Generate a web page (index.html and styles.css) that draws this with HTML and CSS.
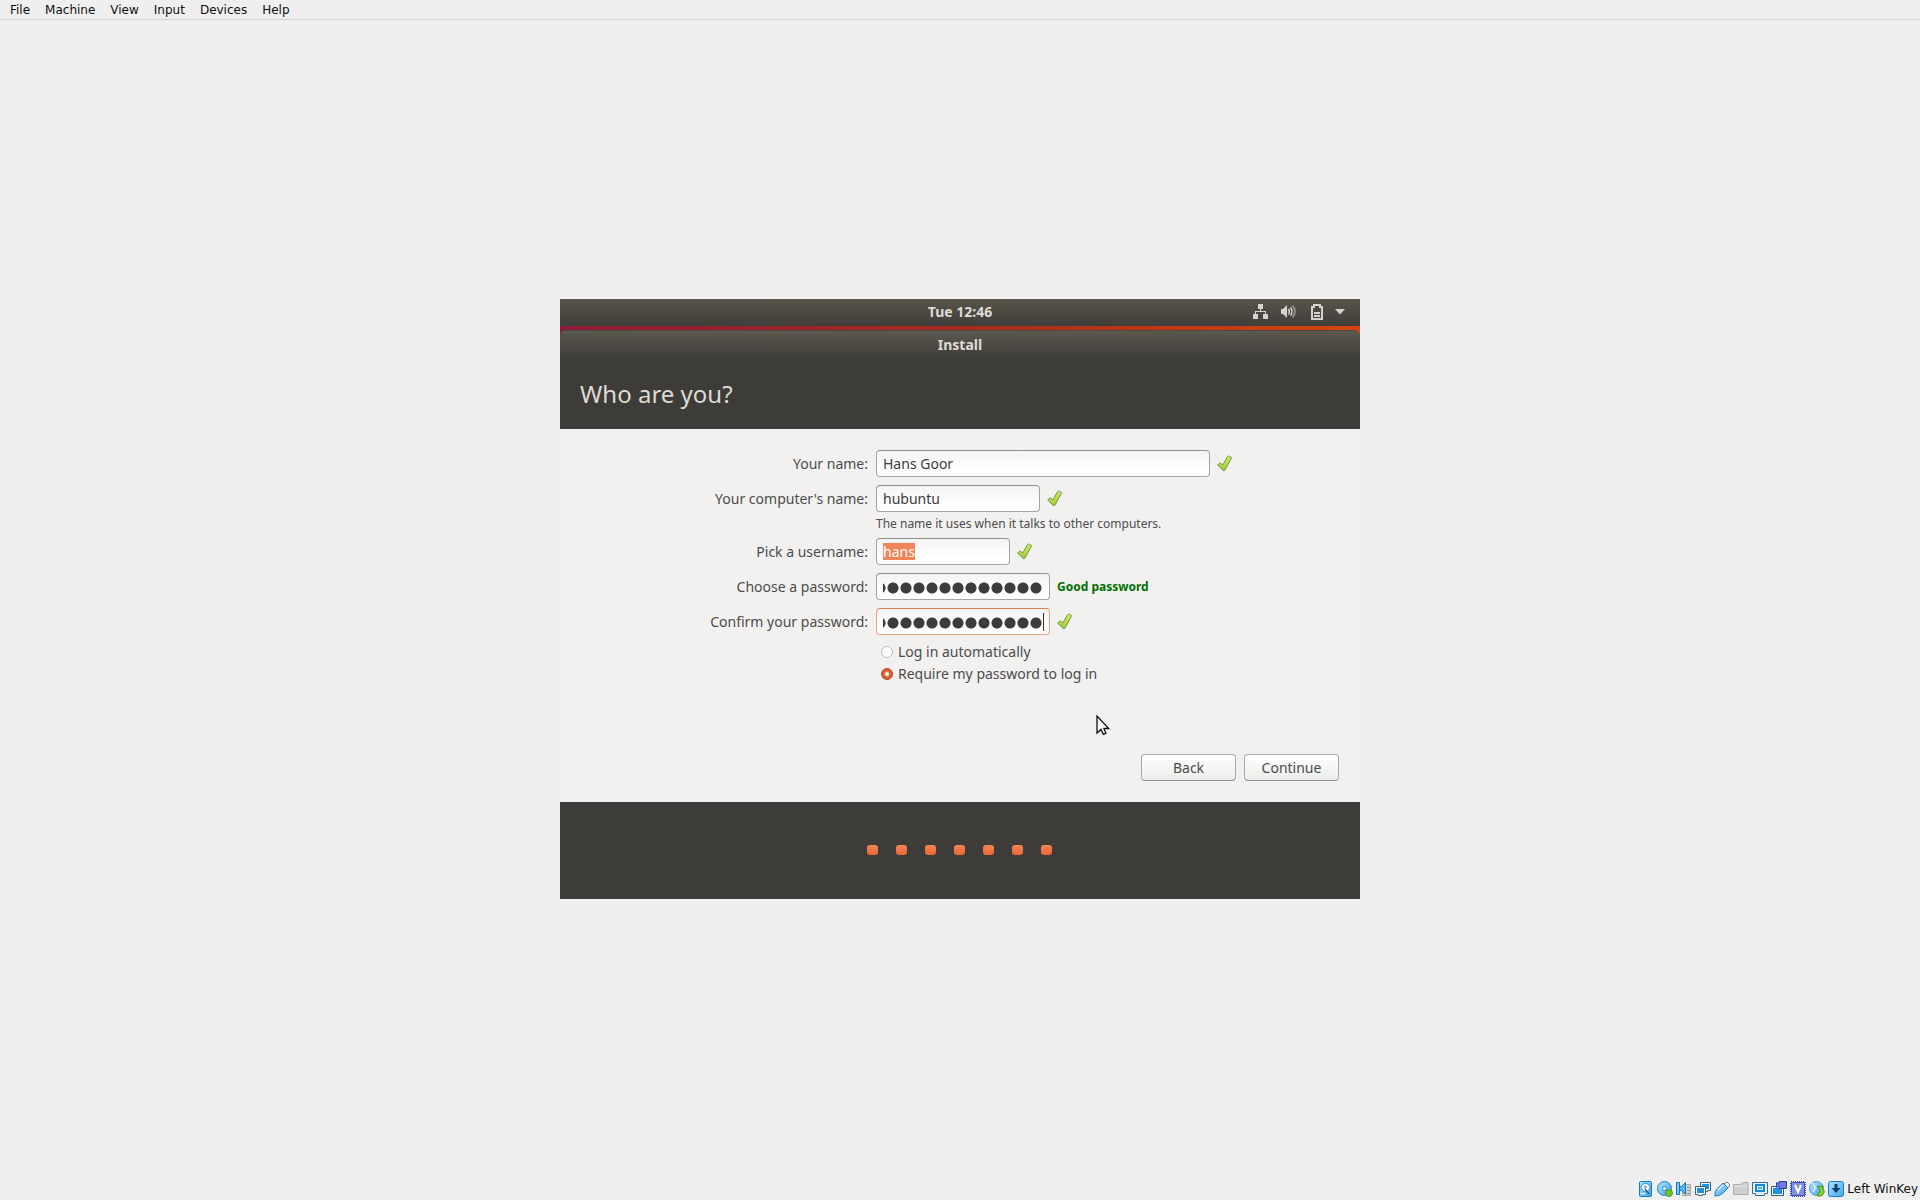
FILE: index.html
```html
<!DOCTYPE html>
<html lang="en">
<head>
<meta charset="utf-8">
<title>Install</title>
<link rel="stylesheet" href="styles.css">
</head>
<body>
<svg class="defs" aria-hidden="true">
  <defs>
    <linearGradient id="green" x1="0" y1="0" x2="0" y2="1"><stop offset="0" stop-color="#d4ea6c"/><stop offset="1" stop-color="#a3c63a"/></linearGradient>
    <linearGradient id="blue" x1="0" y1="0" x2="1" y2="1"><stop offset="0" stop-color="#aee2fc"/><stop offset="1" stop-color="#41a6ee"/></linearGradient>
    <symbol id="check" viewBox="0 0 15 16"><path d="M.7 9.600 3.200 7.400l2.600 2L10.600 1.200q.8-1 2-.4l1.300.7q.8.5.4 1.400L8 14.600q-.8 1.200-1.800.4Z" fill="url(#green)" stroke="#6c9a3c" stroke-linejoin="round"/></symbol>
  </defs>
</svg>

<nav class="menubar">
  <a href="#">File</a><a href="#">Machine</a><a href="#">View</a><a href="#">Input</a><a href="#">Devices</a><a href="#">Help</a>
</nav>

<main class="workspace">
  <section class="guest">
    <header class="panel">
      <time class="clock">Tue 12:46</time>
      <div class="tray">
        <svg class="net" width="15" height="16" viewBox="0 0 15 16" fill="#d5d3cf"><path d="M5 0h5v5H5zM0 10h5v5H0zM10 10h5v5h-5zM7 5h1v2h5v3h-1V8H3v2H2V7h5z"/></svg>
        <svg class="vol" width="16" height="16" viewBox="0 0 16 16"><path d="M0 5h2l4-4v13l-4-4H0z" fill="#d5d3cf"/><path d="M7.500 5q1.600 2.500 0 5.500M9.500 3.500q3 4 0 8" fill="none" stroke="#d5d3cf" stroke-width="1.500"/><path d="M11.500 1.500q5 6 0 12" fill="none" stroke="#8b8982" stroke-width="2"/></svg>
        <svg class="bat" width="12" height="16" viewBox="0 0 12 16" fill="#d5d3cf"><path fill-rule="evenodd" d="M2 2V0h8v2h2v14H0V2zM2 4v10h8V4H8V2H4v2z"/><path d="M3 8h6v2H3zM3 11h6v2H3z"/></svg>
        <svg width="10" height="6" viewBox="0 0 10 6" fill="#d5d3cf"><path d="M0 0h10L5 5.500z"/></svg>
      </div>
    </header>
    <div class="desktop">
      <div class="window">
        <div class="titlebar">Install</div>
        <h1 class="heading">Who are you?</h1>
        <form class="page">
          <div class="fields">
            <label for="name">Your name:</label>
            <div class="field"><input class="entry wide" id="name" type="text" value="Hans Goor"><svg class="ok"><use href="#check"/></svg></div>

            <label for="host">Your computer's name:</label>
            <div class="field"><input class="entry medium" id="host" type="text" value="hubuntu"><svg class="ok"><use href="#check"/></svg></div>
            <p class="hint">The name it uses when it talks to other computers.</p>

            <label for="user">Pick a username:</label>
            <div class="field"><input class="entry short selected" id="user" type="text" value="hans"><svg class="ok"><use href="#check"/></svg></div>

            <label for="pass">Choose a password:</label>
            <div class="field"><input class="entry secret" id="pass" type="password" value="0000000000000"><strong class="strength">Good password</strong></div>

            <label for="confirm">Confirm your password:</label>
            <div class="field"><input class="entry secret active" id="confirm" type="password" value="0000000000000"><svg class="ok"><use href="#check"/></svg></div>

            <div class="choices">
              <label class="choice"><input type="radio" name="login"><span>Log in automatically</span></label>
              <label class="choice"><input type="radio" name="login" checked><span>Require my password to log in</span></label>
            </div>
          </div>
          <div class="actions">
            <button type="button">Back</button>
            <button type="button">Continue</button>
          </div>
        </form>
        <footer class="progress"><i></i><i></i><i></i><i></i><i></i><i></i><i></i></footer>
      </div>
    </div>
    <svg class="cursor" width="14" height="21" viewBox="0 0 14 21"><path d="M1 1v17l4-3.600 2.400 5L10 18.200 7.800 13.500H12.700Z" fill="#fff" stroke="#111" stroke-width="1.300"/></svg>
  </section>
</main>

<footer class="statusbar">
  <svg viewBox="0 0 16 16"><rect x="1.500" y=".5" width="12" height="15" rx="1" fill="url(#blue)" stroke="#1877bd"/><ellipse cx="7.500" cy="6.500" rx="4.500" ry="4" fill="#fff" stroke="#2d89cc"/><circle cx="7.500" cy="6" r="1.500" fill="#6cb3e4"/><path d="m7 8 4 5" stroke="#245f91" stroke-width="1.500"/><path d="M3 12.500h4" stroke="#fff"/></svg>
  <svg viewBox="0 0 16 16"><circle cx="7.500" cy="7.500" r="7" fill="url(#blue)" stroke="#1d87ce"/><circle cx="7.500" cy="7.500" r="2" fill="#fff" stroke="#2789cf"/><circle cx="12" cy="12" r="3.500" fill="#72c42d" stroke="#489618"/></svg>
  <svg viewBox="0 0 16 16"><path d="M8 3.500h6.500v11H6z" fill="#d2d2d2" stroke="#aaa"/><path d="M11 6.500h3M11 9.500h3M11 12.500h3" stroke="#888"/><path d="M.5 1.500h3v12h-3z" fill="#7cc8f8" stroke="#1772b8"/><path d="M3.500 5.500h2l4-4v12l-4-4h-2z" fill="#58b4f2" stroke="#1772b8"/></svg>
  <svg viewBox="0 0 16 16"><path d="M5.500 1.500h10v8h-3v1h-3v-1h-4z" fill="#fff" stroke="#3c617c"/><path d="M7 3h7v5H7z" fill="#1c91e7"/><path d="M.5 5.500h10v8h-3v1h-4v-1h-3z" fill="#fff" stroke="#3c617c"/><path d="M2 7h7v5H2z" fill="#1c91e7"/></svg>
  <svg viewBox="0 0 16 16"><path d="m10 3 3-2 3 3-3 4z" fill="#f4f4f4" stroke="#777"/><path d="M1 15q-1-5 3-8l5-5 5 5-5 5q-3 3-8 3Z" fill="url(#blue)" stroke="#1e80c4"/><path d="m4 9 5-5" stroke="#d9f3ff" stroke-width="1.500"/></svg>
  <svg viewBox="0 0 16 16"><path d="M.5 13.500v-10h7l2-2h5.500v12z" fill="#cfcfcf" stroke="#ababab"/><path d="M1 5h13" stroke="#e8e8e8"/></svg>
  <svg viewBox="0 0 16 16"><path d="M.5 1.500h15v11h-3v2h-9v-2h-3z" fill="#e3f4ff" stroke="#2d6d9e"/><path d="M3 3h10v8H3z" fill="#1685da"/><path d="M5.500 5.500h5v3h-5z" fill="#48b1f5" stroke="#e3f4ff"/></svg>
  <svg viewBox="0 0 16 16"><path d="M.5 5.500h12v9H.5z" fill="#fff" stroke="#345a79"/><path d="M2 7h9v6H2z" fill="#1c91e7"/><path d="M5.500 1.500 8 3V.5h7.500v7H8V5L5.500 6.500z" fill="#6c7cdf" stroke="#3340a3"/></svg>
  <svg viewBox="0 0 16 16"><rect x="1" y="1" width="14" height="14" fill="none" stroke="#3b4aa9" stroke-width="2" stroke-dasharray="1 1"/><rect x="1.500" y="1.500" width="13" height="13" rx="1" fill="#7f90e4" stroke="#3f4fb5"/><path d="m5 4 3 7 3-7" fill="none" stroke="#fff" stroke-width="2"/></svg>
  <svg viewBox="0 0 16 16"><circle cx="7.500" cy="7.500" r="7" fill="url(#blue)" stroke="#4a9fcb"/><path d="M3 2q3 2 3 5l-2 4" fill="none" stroke="#e0f5ff" stroke-width="1.500"/><path d="m8.500 5.500 5-.5v2.500q4 4-1.500 7.500H8.500l.5-3q3-1 2-3z" fill="#84d433" stroke="#45911c"/></svg>
  <svg viewBox="0 0 16 16"><rect x=".5" y=".5" width="15" height="15" rx="2" fill="url(#blue)" stroke="#1a7dc4"/><path d="M6.500 3h3v4h3L8 12 3.500 7h3z" fill="#123f70"/></svg>
  <span>Left WinKey</span>
</footer>
</body>
</html>
```
FILE: styles.css
```css
* { box-sizing: border-box; }

body {
  margin: 0;
  min-height: 100vh;
  display: flex;
  flex-direction: column;
  background: #efefef;
  color: #111;
  font: 12px/17px "DejaVu Sans", sans-serif;
}

.defs { position: absolute; width: 0; height: 0; }

.menubar {
  display: flex;
  gap: 15px;
  padding: 2px 0 0 10px;
  border-bottom: 1px solid #d3d3d3;
}
.menubar a { color: inherit; text-decoration: none; }

.workspace {
  flex: 1;
  display: flex;
  align-items: center;
  justify-content: center;
}

.guest {
  position: relative;
  display: flex;
  flex-direction: column;
  width: 100%;
  max-width: 800px;
  min-height: 600px;
  color: #4c4c4c;
  font: 14px/20px "Noto Sans", "Open Sans", sans-serif;
}

.panel {
  display: grid;
  grid-template-columns: 1fr auto 1fr;
  align-items: center;
  height: 27px;
  padding: 0 15px 1px 0;
  background: linear-gradient(#57544a, #3f3e3a);
  color: #dfdbd2;
}
.clock {
  grid-column: 2;
  padding-left: 15px;
  font-weight: 700;
}
.tray {
  display: flex;
  align-items: center;
  justify-content: flex-end;
}
.net { margin-right: 13px; }
.vol { margin-right: 14px; }
.bat { margin-right: 12px; }

.desktop {
  flex: 1;
  display: flex;
  padding-top: 4px;
  background: linear-gradient(90deg, #8d1c36, #a52c1d 50%, #d6440f);
}
.window {
  flex: 1;
  display: flex;
  flex-direction: column;
  border-radius: 6px 6px 0 0;
  background: #3d3c38;
  overflow: hidden;
}
.titlebar {
  height: 28px;
  line-height: 28px;
  border-top: 1px solid #4a4842;
  background: linear-gradient(#5c594f, #3d3c38);
  color: #dfdbd2;
  font-weight: 700;
  text-align: center;
}
.heading {
  margin: 0;
  padding: 1px 0 0 20px;
  color: #dfdbd2;
  font-size: 24px;
  font-weight: 400;
  line-height: 70px;
}

.page {
  flex: 1;
  display: flex;
  flex-direction: column;
  justify-content: space-between;
  padding: 21px 0;
  background: #f2f1f0;
}
.fields {
  display: grid;
  grid-template-columns: 77fr 121fr;
  gap: 8px;
  align-items: center;
}
.fields > label { text-align: right; }
.field {
  display: flex;
  align-items: center;
  gap: 7px;
}
.entry {
  height: 27px;
  padding: 0 6px;
  border: 1px solid #a5a4a2;
  border-top-color: #8f8e8d;
  border-radius: 4px;
  outline: 0;
  background: linear-gradient(#f3f3f3, #fff 80%);
  color: #3c3c3c;
  font: inherit;
}
.wide { width: 334px; }
.medium { width: 164px; }
.short { width: 134px; }
.selected {
  background:
    linear-gradient(#f08559, #f08559) 6px 4px / 32px 17px no-repeat,
    linear-gradient(#f3f3f3, #fff 80%);
  color: #fff;
}
/* Masked entries draw their own large bullets, cut at the left edge. */
.secret {
  width: 174px;
  background:
    radial-gradient(circle at 6px 9px, #3c3c3c 5px, transparent 6px) right center / 13px 15px repeat-x content-box,
    linear-gradient(#f3f3f3, #fff 80%);
  color: transparent;
}
.active {
  border-color: #e9a080;
  border-top-color: #e67f55;
  background:
    linear-gradient(#333, #333) right 5px center / 1px 18px no-repeat,
    radial-gradient(circle at 6px 9px, #3c3c3c 5px, transparent 6px) right center / 13px 15px repeat-x content-box,
    linear-gradient(#f3f3f3, #fff 80%);
}
.ok { width: 15px; height: 17px; }
.hint {
  grid-column: 2;
  margin: -5px 0 -3px;
  font-size: 12px;
  line-height: 18px;
}
.strength { color: #007000; font-size: 12px; }

.choices {
  grid-column: 2;
  display: grid;
  gap: 6px;
  padding: 1px 0 0 5px;
}
.choice {
  display: flex;
  align-items: center;
  gap: 5px;
  line-height: 16px;
}
.choice input {
  appearance: none;
  width: 12px;
  height: 12px;
  margin: 0;
  border: 1px solid #bbb;
  border-radius: 50%;
  background: #fff;
}
.choice input:checked {
  border-color: #b5481f;
  background: radial-gradient(circle, #fff 1px, #d95f31 3px);
}

.actions {
  display: flex;
  justify-content: flex-end;
  gap: 8px;
  padding-right: 21px;
}
.actions button {
  width: 95px;
  height: 27px;
  padding: 0;
  border: 1px solid #aaa9a7;
  border-bottom-color: #8f8e8d;
  border-radius: 4px;
  background: linear-gradient(#fff, #ececeb);
  color: inherit;
  font: inherit;
}

.progress {
  display: flex;
  align-items: center;
  justify-content: center;
  gap: 18px;
  height: 97px;
  padding: 0 1px 1px 0;
  background: #3d3c38;
}
.progress i {
  width: 11px;
  height: 10px;
  border-radius: 3px;
  background: linear-gradient(#f58455, #eb6638);
}

.cursor { position: absolute; left: 536px; top: 416px; }

.statusbar {
  display: flex;
  align-items: center;
  justify-content: flex-end;
  gap: 3px;
  height: 22px;
  padding-right: 2px;
}
.statusbar svg { width: 16px; height: 16px; }
.statusbar span { padding-top: 1px; }
```
